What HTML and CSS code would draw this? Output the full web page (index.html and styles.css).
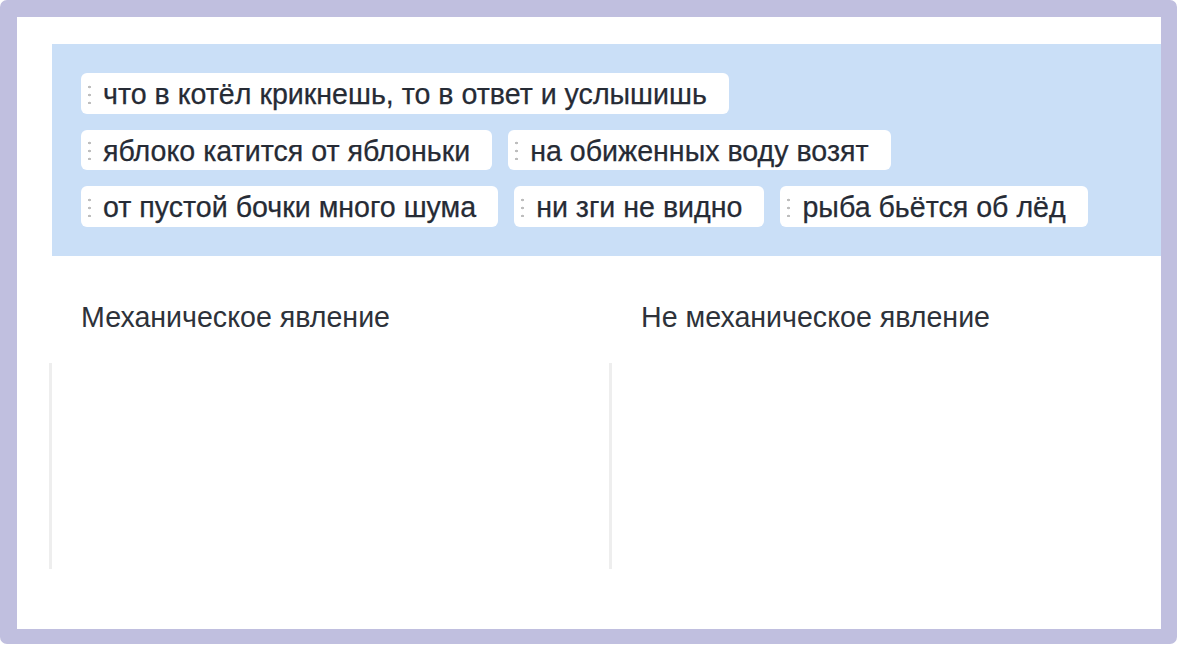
FILE: index.html
```html
<!DOCTYPE html>
<html lang="ru">
<head>
<meta charset="utf-8">
<link rel="stylesheet" href="styles.css">
</head>
<body>
<div class="frame">
  <div class="content">
    <div class="bank">
      <div class="row">
        <div class="chip"><span class="handle"></span><span class="label">что в котёл крикнешь, то в ответ и услышишь</span></div>
      </div>
      <div class="row">
        <div class="chip"><span class="handle"></span><span class="label">яблоко катится от яблоньки</span></div>
        <div class="chip"><span class="handle"></span><span class="label">на обиженных воду возят</span></div>
      </div>
      <div class="row">
        <div class="chip"><span class="handle"></span><span class="label">от пустой бочки много шума</span></div>
        <div class="chip"><span class="handle"></span><span class="label">ни зги не видно</span></div>
        <div class="chip"><span class="handle"></span><span class="label">рыба бьётся об лёд</span></div>
      </div>
    </div>
    <div class="columns">
      <div class="column">
        <h3 class="col-title">Механическое явление</h3>
        <div class="drop"></div>
      </div>
      <div class="column">
        <h3 class="col-title">Не механическое явление</h3>
        <div class="drop"></div>
      </div>
    </div>
  </div>
</div>
</body>
</html>
```

FILE: styles.css
```css
html, body {
  margin: 0;
  padding: 0;
  background: #ffffff;
}

.frame {
  box-sizing: border-box;
  width: 1177px;
  height: 644px;
  border-style: solid;
  border-color: #c0bfdf;
  border-width: 17px 16px 15px 17px;
  border-radius: 7px;
  background: #ffffff;
  overflow: hidden;
  font-family: "Liberation Sans", Arial, sans-serif;
  color: #262b35;
}

.content {
  padding: 27px 0 0 32px;
}

.bank {
  margin-left: 3px;
  background: #cadff7;
  padding: 29px;
  display: flex;
  flex-direction: column;
  gap: 16px;
}

.row {
  display: flex;
  gap: 16px;
}

.chip {
  display: flex;
  align-items: center;
  height: 40.5px;
  padding: 0 22px 0 7px;
  background: #ffffff;
  border-radius: 6px;
  gap: 12px;
  white-space: nowrap;
}

.handle {
  width: 3px;
  height: 19px;
  background-image: radial-gradient(circle, #bdbdbd 1.1px, transparent 1.6px);
  background-size: 3px 8px;
  background-repeat: repeat-y;
  background-position: 0 -2px;
  margin-top: 2px;
}

.label {
  font-size: 28.6px;
  line-height: 28px;
  margin-top: 2px;
  -webkit-text-stroke: 0.25px #262b35;
}

.columns {
  display: grid;
  grid-template-columns: 560px 560px;
  margin-top: 45px;
}

.col-title {
  margin: 0;
  padding-left: 32px;
  font-size: 28.6px;
  font-weight: normal;
  line-height: 32px;
  color: #2e323a;
}

.drop {
  margin-top: 30px;
  height: 206px;
  border-left: 3px solid #eeeeee;
}
```
